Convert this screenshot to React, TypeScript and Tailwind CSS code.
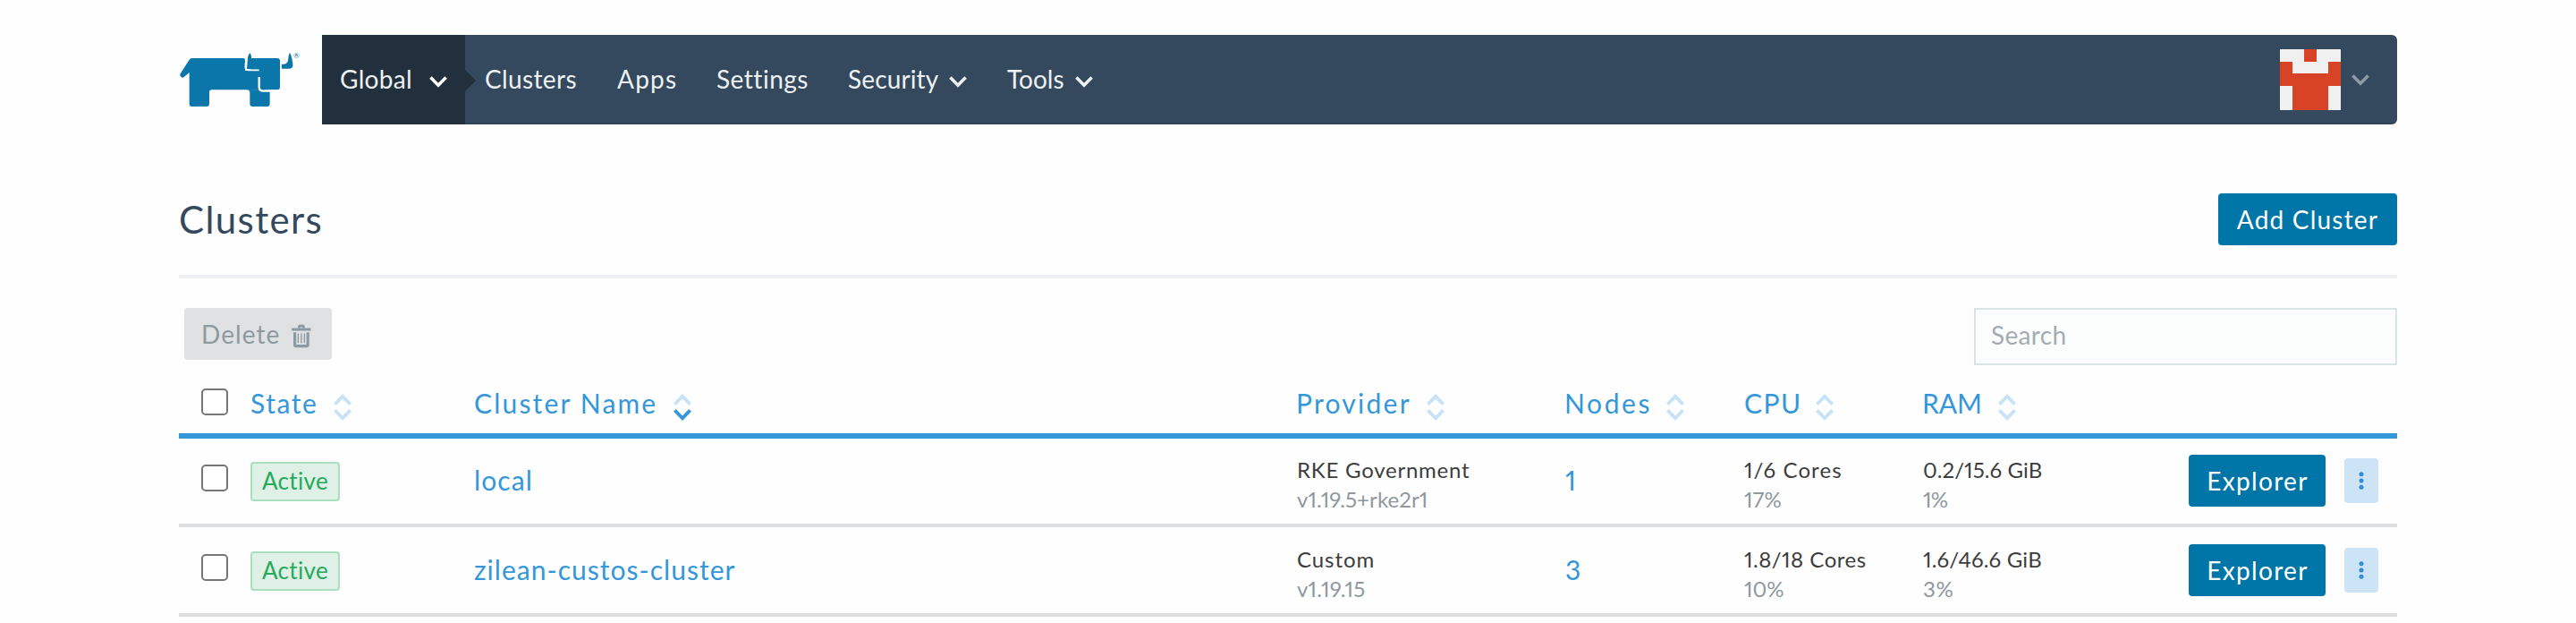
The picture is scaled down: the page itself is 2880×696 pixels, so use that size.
import type { ReactNode } from "react";

function Chevron({ className = "" }: { className?: string }) {
  return (
    <svg viewBox="0 0 20 13" className={`h-[13px] w-5 shrink-0 ${className}`} fill="none" stroke="currentColor" strokeWidth="3.5">
      <path d="M1.4 1.5 10 10.2 18.6 1.5" />
    </svg>
  );
}

function Sort({ active = false }: { active?: boolean }) {
  return (
    <svg viewBox="0 0 20 30" className="mt-[11px] h-[30px] w-5 shrink-0" fill="none" strokeWidth="3.8">
      <path d="M1.4 11.6 10 2.8 18.6 11.6" stroke="#c8e2f6" />
      <path d="M1.4 18.4 10 27.2 18.6 18.4" stroke={active ? "#3497da" : "#c8e2f6"} />
    </svg>
  );
}

function Logo() {
  return (
    <svg viewBox="0 0 450 255" className="-ml-1 h-[85px] w-[150px]" fill="#0b76aa">
      <path d="M56 45H228Q234 45 234 52V86H300V152H250Q244 151 240 151H122Q114 151 114 159V198Q114 207 105 207H56Q47 207 47 198V93L29 108Q25 112 20 108Q14 103 17 97L47 50Q50 45 56 45Z" />
      <path d="M240 151Q250 152 250 161V198Q250 207 259 207H308Q317 207 317 198V152Z" />
      <path d="M243 45Q243 36 250 27Q255 33 255 45H342Q351 45 351 54V142Q351 151 342 151H296Q286 151 286 141V90L240 80Z" />
      <path d="M357 65H366Q378 64 379 46Q379 35 384 26Q391 38 394 64Q396 80 383 80H357Z" />
      <path d="M239 46Q235 60 235 74Q235 85 246 85H281" fill="none" stroke="#fff" strokeWidth="5" />
      <path d="M281 108V142Q282 155 295 155H352" fill="none" stroke="#fff" strokeWidth="7" />
      <text x="396" y="46" fontSize="25" fontFamily="Lato, sans-serif">®</text>
    </svg>
  );
}

function Trash() {
  return (
    <svg viewBox="0 0 22 27" className="h-[27px] w-[22px]" fill="none" stroke="#8e9aa2">
      <path d="M.2 6h21.3" strokeWidth="3" />
      <path d="M8.4 4.5V3.4Q8.4 2 9.8 2H12Q13.4 2 13.4 3.4V4.5" strokeWidth="2.8" />
      <path d="M3.6 9.3V23Q3.6 24.6 5.2 24.6H16.6Q18.2 24.6 18.2 23V9.3" strokeWidth="3.2" />
      <path d="M7.4 10.5v10.8M10.9 10.5v10.8M14.4 10.5v10.8" strokeWidth="1.3" />
    </svg>
  );
}

function Avatar() {
  const rows = ["..#..", "#...#", "#####", ".###.", ".###."];
  return (
    <svg viewBox="0 0 5 5" className="size-[68px]" shapeRendering="crispEdges">
      <rect width="5" height="5" fill="#f0f0f0" />
      {rows.map((r, y) =>
        [...r].map((c, x) => (c === "#" ? <rect key={`${x}-${y}`} x={x} y={y} width="1" height="1" fill="#d84326" /> : null)),
      )}
    </svg>
  );
}

function Checkbox({ className = "" }: { className?: string }) {
  return (
    <div className={`pl-[25px] ${className}`}>
      <input type="checkbox" className="block size-[30px] appearance-none rounded-[5px] border-2 border-[#767676] bg-white" />
    </div>
  );
}

const COLS = "grid grid-cols-[80px_250px_920px_300px_200px_200px_200px_330px] items-center";

function Head({ children, active, className = "" }: { children: ReactNode; active?: boolean; className?: string }) {
  return (
    <div className={`flex items-center whitespace-nowrap ${className}`}>
      {children}
      <Sort active={active} />
    </div>
  );
}

function Pair({ top, bottom, className = "" }: { top: ReactNode; bottom: ReactNode; className?: string }) {
  return (
    <div className={`whitespace-nowrap pt-2 text-[24px] leading-[33px] ${className}`}>
      <div className="text-[#3d3d3d]">{top}</div>
      <div className="text-[#8e989e]">{bottom}</div>
    </div>
  );
}

function Actions() {
  return (
    <div className="flex items-center justify-end gap-[21px] pr-[21px]">
      <button className="h-[58px] w-[153px] rounded-[4px] bg-[#0075a8] pl-px text-[28px] tracking-[1.33px] text-white">Explorer</button>
      <button className="flex h-[50px] w-[38px] items-center justify-center rounded-[4px] bg-[#cce4f6]">
        <svg viewBox="0 0 6 20" className="h-5 w-1.5" fill="#2b8fd8">
          <circle cx="3" cy="2.7" r="2.5" />
          <circle cx="3" cy="10" r="2.5" />
          <circle cx="3" cy="17.3" r="2.5" />
        </svg>
      </button>
    </div>
  );
}

type Cluster = {
  name: ReactNode;
  provider: ReactNode;
  version: ReactNode;
  nodes: string;
  cpu: ReactNode;
  cpuPct: ReactNode;
  ram: ReactNode;
  ramPct: ReactNode;
};

function ClusterRow(p: Cluster) {
  return (
    <div className={`${COLS} h-[100px] border-b-4 border-[#dddfe1]`}>
      <Checkbox className="pb-1.5" />
      <div className="pt-0.5">
        <span className="flex h-11 w-[100px] items-center justify-center rounded-[4px] border-2 border-[#a9dfbf] bg-[#dff1e6] pb-0.5 text-[26px] tracking-[0.37px] text-[#27aa5b]">
          Active
        </span>
      </div>
      <a className="pb-0.5 text-[30px] text-[#3497da]">{p.name}</a>
      <Pair top={p.provider} bottom={p.version} />
      <a className="pb-0.5 text-[30px] text-[#3497da]">{p.nodes}</a>
      <Pair top={p.cpu} bottom={p.cpuPct} />
      <Pair top={p.ram} bottom={p.ramPct} />
      <Actions />
    </div>
  );
}

export default function App() {
  return (
    <div className="h-[696px] overflow-hidden bg-[#fefefe] px-[200px] pt-[39px] font-['Lato',sans-serif] leading-none proportional-nums">
      <header className="flex h-[100px]">
        <div className="mt-[11px] w-40 shrink-0">
          <Logo />
        </div>
        <nav className="flex flex-1 items-center rounded-r-[6px] border-b-2 border-[#2f4458] bg-[#34495e] text-[28px] text-[#eef1f2]">
          <div className="-mb-0.5 flex h-[100px] w-40 items-center bg-[#22303d] pb-0.5 pl-5 tracking-[0.32px]">
            Global
            <Chevron className="ml-[19px] mt-[7px] text-white" />
          </div>
          <svg viewBox="0 0 12 24" className="mt-1 h-6 w-3" fill="#22303d">
            <path d="M0 0 12 12 0 24Z" />
          </svg>
          <div className="flex items-center pl-[10px]">
            <a className="w-[148px] tracking-[0.37px]">Clusters</a>
            <a className="w-[111px] tracking-[1.24px]">Apps</a>
            <a className="w-[147px] tracking-[0.51px]">Settings</a>
            <a className="flex w-[178px] items-center tracking-[0.13px]">
              Security
              <Chevron className="ml-[12px] mt-[7px]" />
            </a>
            <a className="flex items-center">
              Tools
              <Chevron className="ml-[12px] mt-[7px]" />
            </a>
          </div>
          <div className="ml-auto flex items-center gap-3 pr-[31px] pt-0.5 text-[#8f9ba3]">
            <Avatar />
            <Chevron />
          </div>
        </nav>
      </header>

      <div className="mt-[77px] flex h-[58px] items-center justify-between">
        <h1 className="text-[42px] tracking-[1.39px] text-[#34495e]">Clusters</h1>
        <button className="h-[58px] w-[200px] rounded-[4px] bg-[#0075a8] text-[28px] tracking-[1.2px] text-white">Add Cluster</button>
      </div>
      <div className="mt-[33px] h-1 bg-[#eceef1]" />

      <div className="mt-[33px] flex h-16 items-start justify-between pl-1.5">
        <button className="flex h-[58px] w-[165px] items-center rounded-[4px] bg-[#dfe1e3] pl-[19px] text-[28px] tracking-[1.09px] text-[#8e9aa0]">
          Delete
          <span className="ml-[13px] mt-1">
            <Trash />
          </span>
        </button>
        <input
          placeholder="Search"
          className="h-16 w-[473px] border-2 border-[#dce5e6] bg-[#fbfdfc] pb-1 pl-[17px] text-[28px] tracking-[0.34px] placeholder:text-[#a4acb3]"
        />
      </div>

      <div className={`${COLS} h-[82px] border-b-6 border-[#3497da] pt-[7px] text-[30px] text-[#3497da]`}>
        <Checkbox className="pb-0.5" />
        <Head className="gap-[18px] tracking-[1.56px]">State</Head>
        <Head active className="gap-[18px] tracking-[2.18px]">Cluster Name</Head>
        <Head className="-ml-px gap-[17px] tracking-[2.24px]">Provider</Head>
        <Head className="-ml-px gap-[16px] tracking-[2.6px]">Nodes</Head>
        <Head className="gap-[15px] tracking-[1.47px]">CPU</Head>
        <Head className="-ml-px gap-[18px]">RAM</Head>
      </div>

      <div className="-mt-px">
        <ClusterRow
          name={<span className="tracking-[1.1px]">local</span>}
          provider={<span className="tracking-[0.76px]">RKE Government</span>}
          version={<span className="tracking-[0.1px]">v1.19.5+rke2r1</span>}
          nodes="1"
          cpu={<span className="tracking-[1.1px]">1/6 Cores</span>}
          cpuPct={<span className="tracking-[0.1px]">17%</span>}
          ram={<span className="tracking-[0.1px]">0.2/15.6 GiB</span>}
          ramPct={<span className="tracking-[-0.7px]">1%</span>}
        />
        <ClusterRow
          name={<span className="tracking-[1.03px]">zilean-custos-cluster</span>}
          provider={<span className="tracking-[0.95px]">Custom</span>}
          version={<span className="tracking-[0.2px]">v1.19.15</span>}
          nodes="3"
          cpu={<span className="tracking-[0.5px]">1.8/18 Cores</span>}
          cpuPct="10%"
          ram={<span className="tracking-[0.2px]">1.6/46.6 GiB</span>}
          ramPct={<span className="tracking-[0.68px]">3%</span>}
        />
      </div>
    </div>
  );
}
